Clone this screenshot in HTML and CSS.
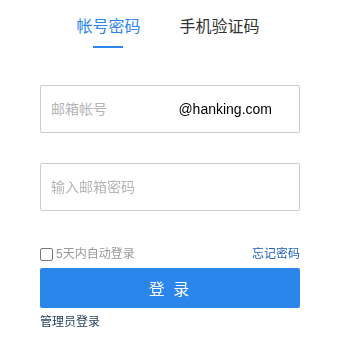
FILE: index.html
```html
<!DOCTYPE html>
<html lang="zh">
<head>
<meta charset="utf-8">
<link rel="stylesheet" href="styles.css">
</head>
<body>
<div class="login">
  <div class="tabs">
    <div class="tab active">帐号密码</div>
    <div class="tab">手机验证码</div>
  </div>
  <div class="field field-user">
    <input class="inp" type="text" placeholder="邮箱帐号" autofocus>
    <span class="suffix">@hanking.com</span>
  </div>
  <div class="field field-pass">
    <input class="inp" type="password" placeholder="输入邮箱密码">
  </div>
  <div class="opts">
    <label class="remember"><span class="box"></span>5天内自动登录</label>
    <a class="forgot">忘记密码</a>
  </div>
  <button class="btn">登 录</button>
  <a class="admin">管理员登录</a>
</div>
</body>
</html>
```
FILE: styles.css
```css
* { box-sizing: border-box; }
html, body { margin: 0; padding: 0; background: #fff; }
body {
  font-family: "Liberation Sans", "Noto Sans CJK SC", sans-serif;
  width: 338px;
}
.login {
  padding: 15px 38px 0 40px;
  display: flex;
  flex-direction: column;
}
.tabs {
  display: flex;
  justify-content: center;
  gap: 39px;
  margin-left: -4px;
}
.tab {
  font-size: 16px;
  line-height: 24px;
  color: #333;
  position: relative;
  padding-bottom: 9px;
}
.tab.active { color: #2b86ec; }
.tab.active::after {
  content: "";
  position: absolute;
  left: 50%;
  bottom: 0;
  width: 30px;
  height: 2px;
  margin-left: -15px;
  background: #2b86ec;
}
.field {
  height: 48px;
  border: 1px solid #ccc;
  border-radius: 2px;
  display: flex;
  align-items: center;
  padding: 0 27px 0 10px;
}
.field-user { margin-top: 37px; }
.field-pass { margin-top: 30px; }
.inp {
  flex: 1;
  min-width: 0;
  border: none;
  outline: none;
  padding: 0;
  font-family: inherit;
  font-size: 14px;
  color: #333;
  background: transparent;
}
.inp::placeholder { color: #b5b5b5; }
.suffix {
  font-size: 14px;
  color: #000;
}
.opts {
  margin-top: 35px;
  display: flex;
  justify-content: space-between;
  align-items: center;
  font-size: 12px;
  line-height: 16px;
}
.remember {
  display: flex;
  align-items: center;
  color: #999;
  gap: 3px;
}
.box {
  width: 13px;
  height: 13px;
  border: 1px solid #777;
  border-radius: 2px;
}
.forgot { color: #1e5fc0; }
.btn {
  margin-top: 6px;
  height: 40px;
  border: none;
  border-radius: 2px;
  background: #2b86ec;
  color: #fff;
  font-family: inherit;
  font-size: 16px;
  letter-spacing: 2px;
  padding: 0;
}
.admin {
  margin-top: 6px;
  font-size: 12px;
  line-height: 16px;
  color: #1f3d5c;
}
```
